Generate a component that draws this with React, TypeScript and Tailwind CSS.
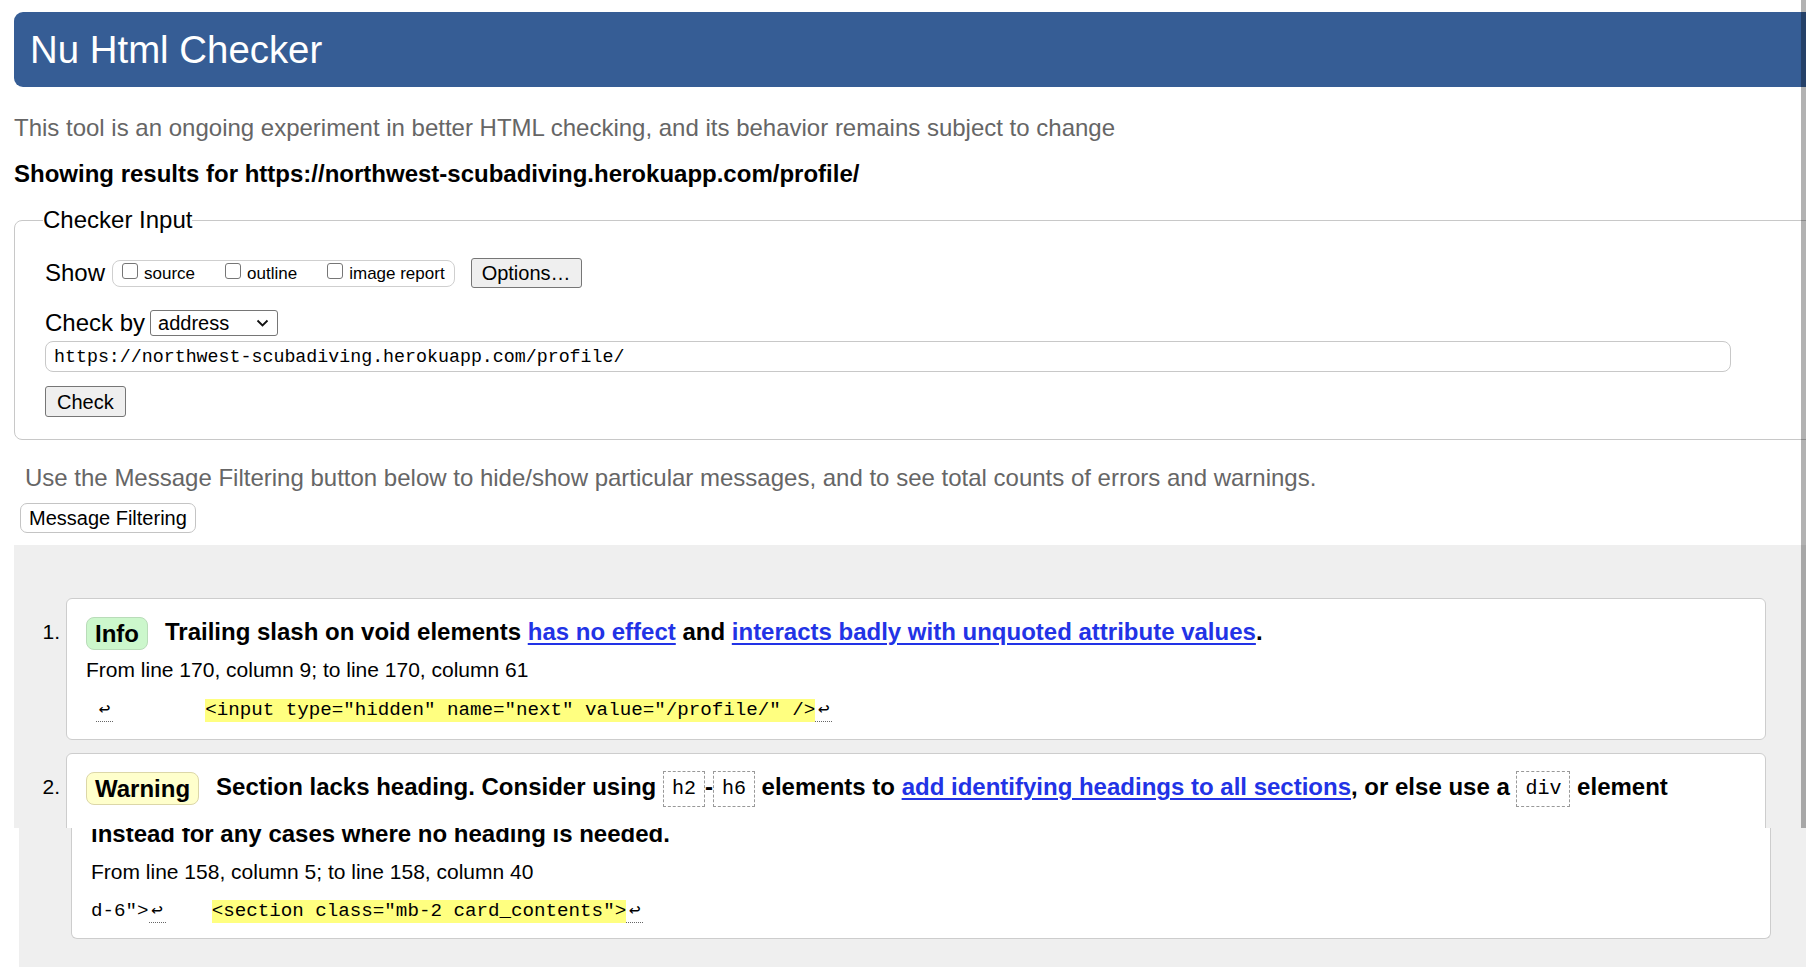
import React from "react";

const SANS = "font-['Liberation_Sans',Arial,sans-serif]";
const MONO = "font-['Liberation_Mono','DejaVu_Sans_Mono',monospace]";

function Lf() {
  return (
    <span className="inline-block w-[17px] border-b border-dotted border-[#666] text-center leading-[22px]">
      ↩
    </span>
  );
}

function Badge({ kind, children }: { kind: "info" | "warning"; children: React.ReactNode }) {
  return (
    <strong
      className={
        "mr-[17px] inline-block rounded-[8px] border px-[8px] align-middle leading-[31px] " +
        (kind === "info" ? "border-[#b9dcb9] bg-[#ccf7cc]" : "border-[#dcd7a8] bg-[#ffffcc]")
      }
    >
      {children}
    </strong>
  );
}

function CodeBox({ children }: { children: React.ReactNode }) {
  return (
    <code
      className={`${MONO} inline-block border border-dashed border-[#999] px-[8px] align-middle text-[20px] font-normal leading-[34px]`}
    >
      {children}
    </code>
  );
}

function Link({ children }: { children: React.ReactNode }) {
  return (
    <a href="#" className="text-[#2233e6] underline underline-offset-[3px]">
      {children}
    </a>
  );
}

function Checkbox({ label }: { label: string }) {
  return (
    <label className="flex items-center">
      <span className="-translate-y-[2px] h-[16px] w-[16px] rounded-[3px] border border-[#767676] bg-white" />
      <span className="ml-[6px] translate-y-[1px] text-[17px] leading-[20px]">{label}</span>
    </label>
  );
}

export default function App() {
  return (
    <div className={`${SANS} relative h-[967px] w-[1806px] overflow-hidden bg-white text-black`}>
      {/* upper part of the capture */}
      <div className="flex h-[828px] flex-col overflow-hidden pl-[14px]">
        <h1 className="mt-[12px] flex h-[75px] shrink-0 items-center rounded-l-[9px] bg-[#365d95] pl-[16px] text-[38.4px] font-normal text-white">
          Nu Html Checker
        </h1>

        <p className="mt-[29px] text-[24px] leading-[24px] text-[#666]">
          This tool is an ongoing experiment in better HTML checking, and its behavior remains subject to change
        </p>

        <p className="mt-[22px] text-[24px] font-bold leading-[24px]">
          Showing results for https://northwest-scubadiving.herokuapp.com/profile/
        </p>

        <fieldset className="-mr-[40px] mt-[22px] shrink-0 rounded-l-[8px] border border-[#c8c8c8] pb-[22px] pl-[30px]">
          <legend className="-ml-[2px] text-[24px] leading-[24px]">Checker Input</legend>

          <div className="mt-[26px] flex h-[30px] items-center">
            <span className="text-[24px] leading-[24px]">Show</span>
            <div className="ml-[7px] flex h-[27px] items-center gap-[30px] rounded-[8px] border border-[#cfcfcf] px-[9px]">
              <Checkbox label="source" />
              <Checkbox label="outline" />
              <Checkbox label="image report" />
            </div>
            <button className="ml-[16px] h-[30px] rounded-[3px] border border-[#767676] bg-[#efefef] px-[10px] text-[20px] leading-[20px]">
              Options…
            </button>
          </div>

          <div className="mt-[22px] flex h-[26px] items-center">
            <span className="text-[24px] leading-[24px]">Check by</span>
            <div className="ml-[5px] flex h-[26px] w-[128px] items-center justify-between rounded-[3px] border border-[#767676] bg-white pl-[7px] pr-[8px]">
              <span className="text-[20px] leading-[20px]">address</span>
              <svg width="13" height="8" viewBox="0 0 13 8" fill="none">
                <path d="M1.5 1.5 L6.5 6.5 L11.5 1.5" stroke="#111" strokeWidth="1.8" />
              </svg>
            </div>
          </div>

          <div
            className={`${MONO} mt-[5px] flex h-[31px] w-[1686px] items-center rounded-[8px] border border-[#c8c8c8] pl-[8px] pt-[3px] text-[18.3px]`}
          >
            https://northwest-scubadiving.herokuapp.com/profile/
          </div>

          <button className="mt-[14px] h-[31px] rounded-[3px] border border-[#767676] bg-[#efefef] px-[11px] text-[20px] leading-[20px]">
            Check
          </button>
        </fieldset>

        <p className="ml-[11px] mt-[26px] text-[24px] leading-[24px] text-[#666]">
          Use the Message Filtering button below to hide/show particular messages, and to see total counts of errors and
          warnings.
        </p>

        <div className="mt-[13px]">
          <button className="ml-[6px] h-[30px] rounded-[7px] border border-[#c4c4c4] bg-white px-[8px] text-[20px] leading-[20px]">
            Message Filtering
          </button>
        </div>

        <ol className="mt-[12px] flex-1 bg-[#efefef] pt-[53px]">
          <li className="flex">
            <div className="w-[52px] shrink-0 pr-[6px] pt-[12px] text-right text-[21px] leading-[43px]">1.</div>
            <div className="mr-[40px] flex-1 rounded-[6px] border border-[#cdcdcd] bg-white px-[19px] pb-[17px] pt-[11px]">
              <p className="whitespace-nowrap text-[24px] font-bold leading-[43px]">
                <Badge kind="info">Info</Badge>
                Trailing slash on void elements <Link>has no effect</Link> and{" "}
                <Link>interacts badly with unquoted attribute values</Link>.
              </p>
              <p className="mt-[5px] text-[21px] leading-[24px]">From line 170, column 9; to line 170, column 61</p>
              <div className={`${MONO} ml-[10px] mt-[17px] whitespace-pre text-[19.2px] leading-[23px]`}>
                <Lf />
                {"        "}
                <b className="inline-block bg-[#ffff80] font-normal">
                  {'<input type="hidden" name="next" value="/profile/" />'}
                </b>
                <Lf />
              </div>
            </div>
          </li>

          <li className="mt-[13px] flex">
            <div className="w-[52px] shrink-0 pr-[6px] pt-[12px] text-right text-[21px] leading-[43px]">2.</div>
            <div className="mr-[40px] flex-1 rounded-[6px] border border-[#cdcdcd] bg-white px-[19px] pb-[60px] pt-[11px]">
              <p className="whitespace-nowrap text-[24px] font-bold leading-[43px]">
                <Badge kind="warning">Warning</Badge>
                Section lacks heading. Consider using <CodeBox>h2</CodeBox>-<CodeBox>h6</CodeBox> elements to{" "}
                <Link>add identifying headings to all sections</Link>, or else use a <CodeBox>div</CodeBox> element
              </p>
            </div>
          </li>
        </ol>
      </div>

      {/* lower part of the capture, shifted 5px right */}
      <div className="ml-[5px] h-[139px] pl-[14px]">
        <div className="flex h-full bg-[#efefef]">
          <div className="w-[52px] shrink-0" />
          <div className="mr-[35px] flex-1 self-start rounded-b-[6px] border-x border-b border-[#cdcdcd] bg-white px-[19px] pb-[15px]">
            <div className="h-[25px] overflow-hidden">
              <p className="-mt-[16px] whitespace-nowrap text-[24px] font-bold leading-[43px]">
                instead for any cases where no heading is needed.
              </p>
            </div>
            <p className="mt-[7px] text-[21px] leading-[24px]">From line 158, column 5; to line 158, column 40</p>
            <div className={`${MONO} mt-[16px] whitespace-pre text-[19.2px] leading-[23px]`}>
              {'d-6">'}
              <Lf />
              {"    "}
              <b className="inline-block bg-[#ffff80] font-normal">{'<section class="mb-2 card_contents">'}</b>
              <Lf />
            </div>
          </div>
        </div>
      </div>

      {/* scrollbar strip */}
      <div className="absolute right-0 top-0 h-[828px] w-[5px] bg-black/30" />
    </div>
  );
}
